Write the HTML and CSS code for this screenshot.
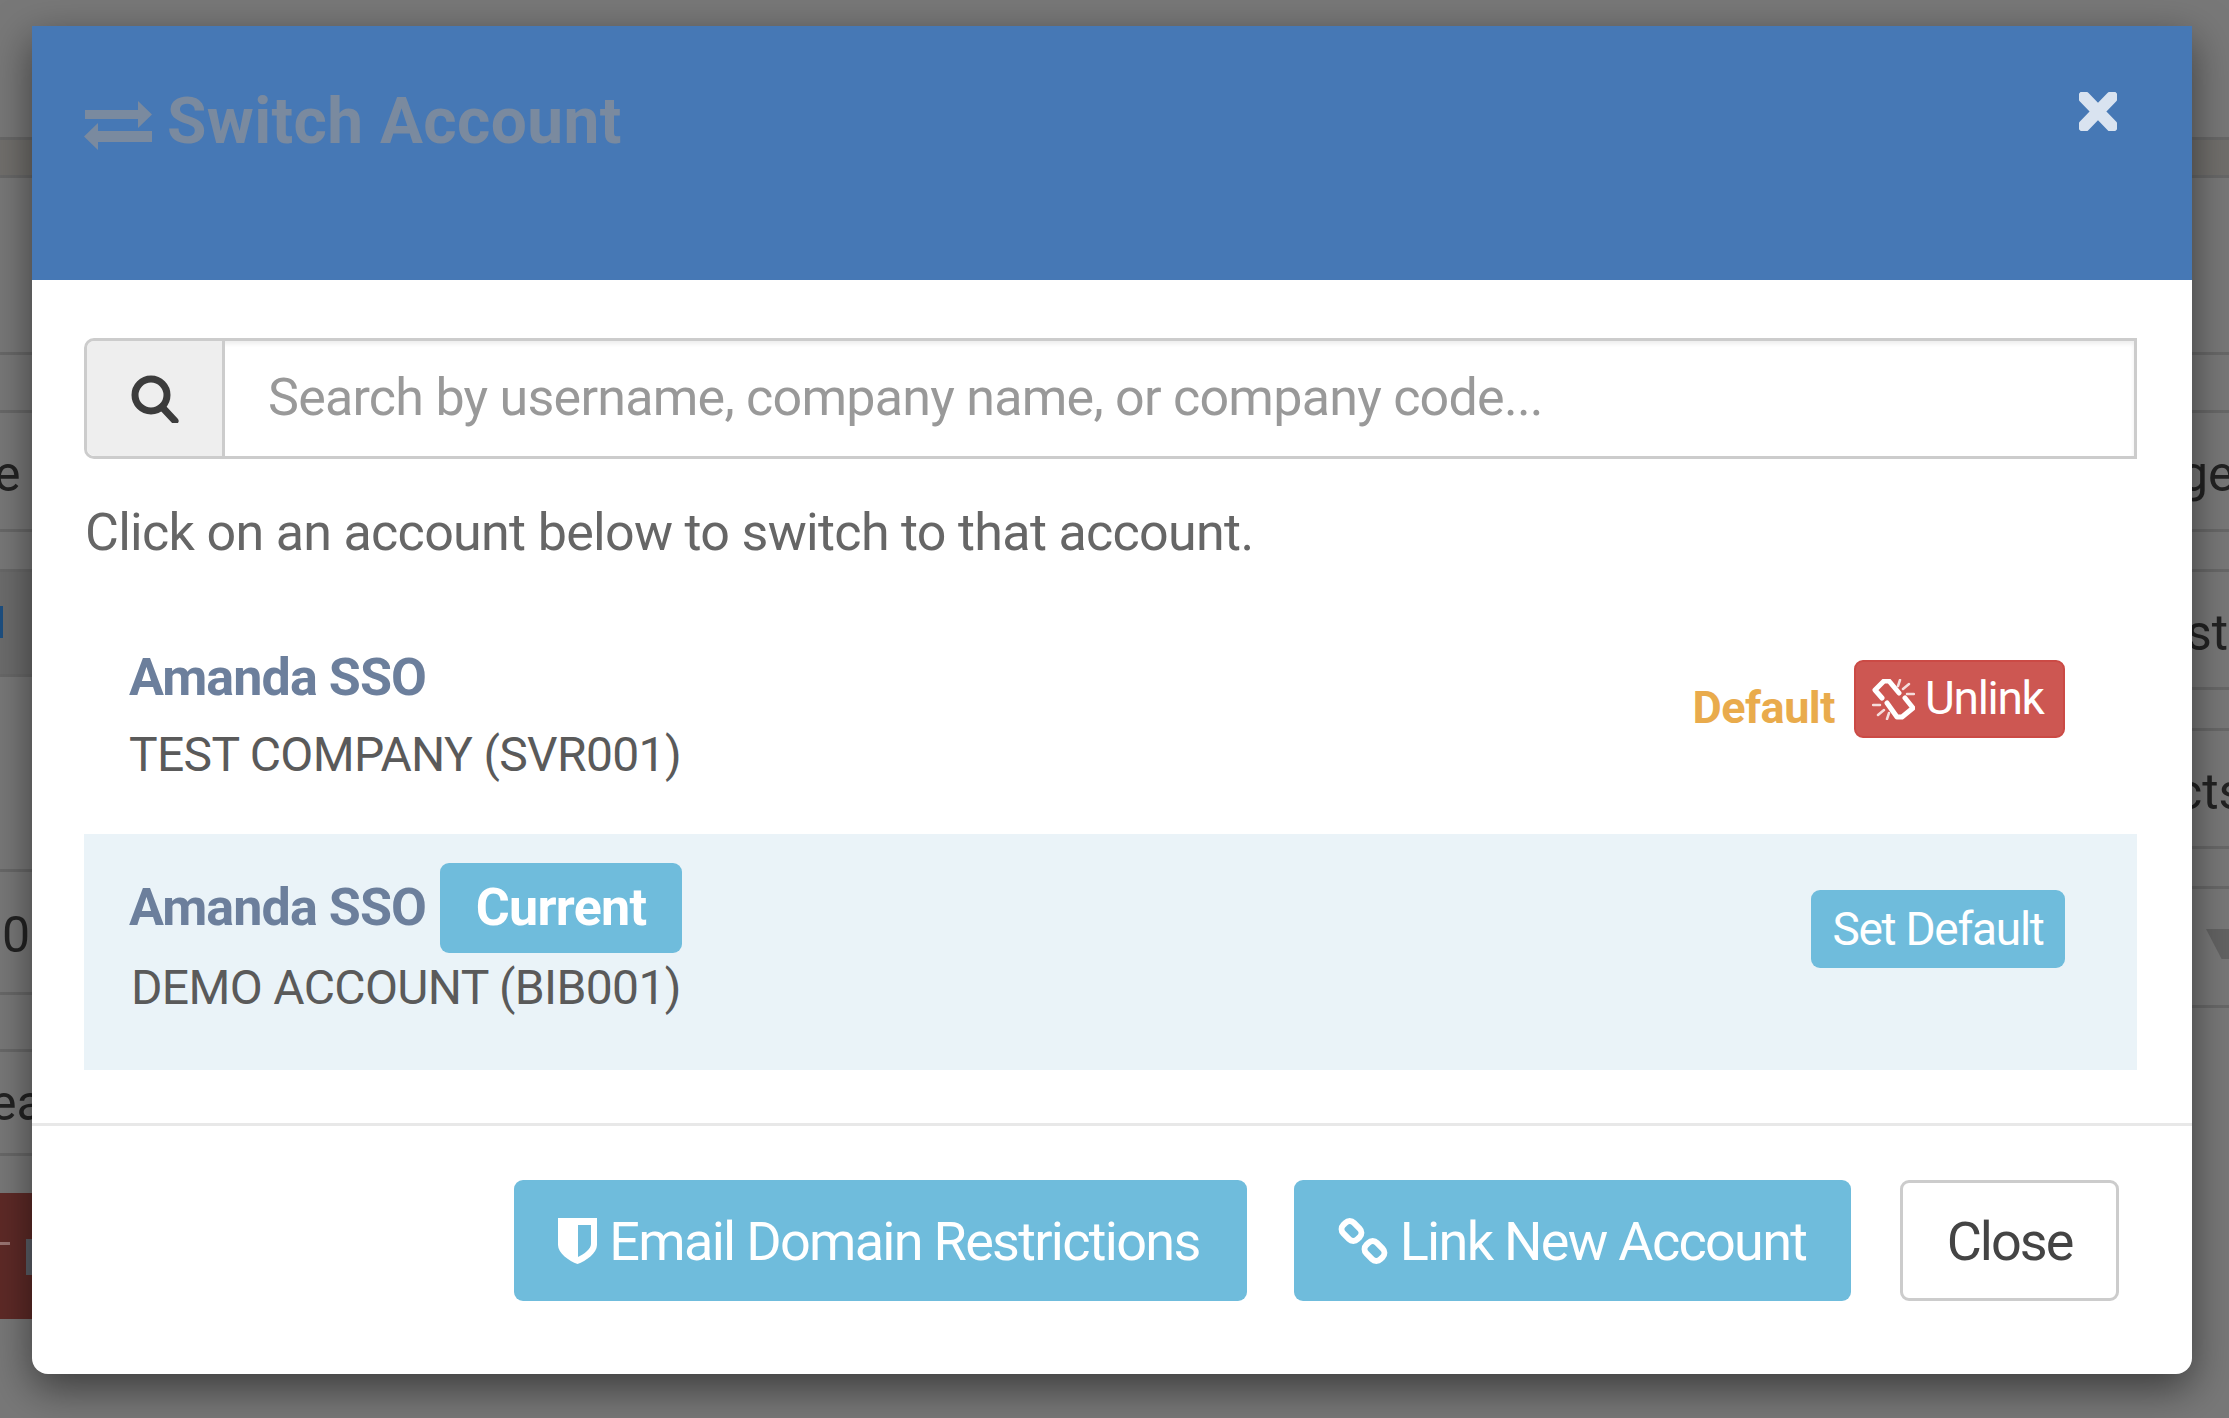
FILE: index.html
```html
<!DOCTYPE html>
<html lang="en">
<head>
<meta charset="utf-8">
<title>Switch Account</title>
<link rel="stylesheet" href="styles.css">
</head>
<body>
<div class="page">
  <div class="side side-left">
    <div class="cell"></div>
    <div class="cell cell-warm"></div>
    <div class="cell"></div>
    <div class="cell"></div>
    <div class="cell"><span class="frag frag-e">e</span></div>
    <div class="cell"></div>
    <div class="cell cell-dark"><span class="bluemark"></span></div>
    <div class="cell"></div>
    <div class="cell"><span class="frag frag-zero">0</span></div>
    <div class="cell"></div>
    <div class="cell"><span class="frag frag-ea">ea</span></div>
    <div class="cell-plain"></div>
    <div class="redbtn"><span class="red-dash"></span><span class="red-mark"></span></div>
  </div>
  <div class="side side-right">
    <div class="cell"></div>
    <div class="cell cell-warm"></div>
    <div class="cell"></div>
    <div class="cell"></div>
    <div class="cell"><span class="frag frag-ge">ge</span></div>
    <div class="cell"></div>
    <div class="cell"><span class="frag frag-st">st</span></div>
    <div class="cell"></div>
    <div class="cell"><span class="frag frag-cts">cts</span></div>
    <div class="cell"></div>
    <div class="cell"><span class="filter-tip"></span></div>
  </div>
</div>

<div class="modal">
  <header class="modal-head">
    <h2 class="title">
      <svg class="ico-exchange" viewBox="0 0 68 49"><path d="M1 9h53V0l14 13.500L54 27v-9H1zM68 30v11H14v8L0 35.500 14 22v8z"/></svg>
      <span>Switch Account</span>
    </h2>
    <svg class="ico-close" viewBox="0 0 38 39"><path d="M5 5l28 29M33 5L5 34"/></svg>
  </header>

  <div class="modal-body">
    <div class="search">
      <span class="search-addon">
        <svg class="ico-search" viewBox="0 0 48 48"><circle cx="20" cy="20" r="16"/><path d="M31 32l13 14"/></svg>
      </span>
      <span class="search-field">Search by username, company name, or company code...</span>
    </div>
    <p class="hint">Click on an account below to switch to that account.</p>

    <div class="account account-first">
      <div class="acc-info">
        <div class="acc-name"><span>Amanda SSO</span></div>
        <div class="acc-company">TEST COMPANY (SVR001)</div>
      </div>
      <div class="acc-actions">
        <span class="default-label">Default</span>
        <span class="btn-sm btn-danger">
          <svg class="ico-unlink" viewBox="0 0 43 41"><path class="thick" d="M10 19L3 11 12 2h5l10 12M15 24l10 14h5l11-9-8-10"/><path class="thin" d="M28 1l-2 6M37 5l-6 5M42 15h-7M15 40l2-6M6 36l6-5M1 26h7"/></svg>
          <span class="unlink-text">Unlink</span>
        </span>
      </div>
    </div>

    <div class="account account-current">
      <div class="acc-info">
        <div class="acc-name"><span>Amanda SSO</span><span class="badge">Current</span></div>
        <div class="acc-company acc-company-demo">DEMO ACCOUNT (BIB001)</div>
      </div>
      <div class="acc-actions">
        <span class="btn-sm btn-info">Set Default</span>
      </div>
    </div>
  </div>

  <footer class="modal-foot">
    <span class="btn btn-info btn-email">
      <svg class="ico-shield" viewBox="0 0 39 47"><path fill-rule="evenodd" d="M0 1h39v27c0 8-11 16-19.500 19C11 44 0 36 0 28zM20 8v32c6-3 13-8 13-13V8z"/></svg>
      <span>Email Domain Restrictions</span>
    </span>
    <span class="btn btn-info btn-link">
      <svg class="ico-link" viewBox="0 0 50 48"><rect x="3.500" y="6.500" width="20" height="15" rx="6" transform="rotate(45 13.500 14)"/><rect x="26.500" y="26.500" width="20" height="15" rx="6" transform="rotate(45 36.500 34)"/></svg>
      <span>Link New Account</span>
    </span>
    <span class="btn btn-default">Close</span>
  </footer>
</div>
</body>
</html>
```
FILE: styles.css
```css
* { box-sizing: border-box; }

html, body { margin: 0; height: 1418px; overflow: hidden; }

body {
  position: relative;
  background: #787878;
  font-family: Roboto, "Liberation Sans", sans-serif;
  color: #666;
}

/* dimmed page behind the dialog */
.page {
  display: flex;
  justify-content: space-between;
  height: 1418px;
  overflow: hidden;
  color: #222;
  font-size: 50px;
}

.side { display: grid; align-content: start; }

.side-left {
  width: 32px;
  grid-template-rows: 140px 38px 177px 58px 119px 40px 105px 195px 123px 57px 104px 37px 126px;
}

.side-right {
  width: 37px;
  grid-template-rows: 140px 38px 177px 58px 119px 40px 118px 41px 118px 40px 119px;
}

.cell {
  display: flex;
  align-items: center;
  position: relative;
  overflow: hidden;
  border-bottom: 3px solid #686868;
}

.cell-warm { background: #716f6c; }
.cell-dark { background: #6c6c6c; }

.frag { line-height: 1; white-space: nowrap; padding-top: 6px; }
.frag-e { margin-left: -6px; }
.frag-zero { margin-left: 2px; }
.frag-ea { margin-left: -10px; padding-top: 0; }
.frag-ge { margin-left: -12px; }
.frag-st { margin-left: -6px; }
.frag-cts { margin-left: -16px; }

.bluemark { position: absolute; left: 0; top: 34px; width: 3px; height: 32px; background: #1d4f80; }

.redbtn { position: relative; background: #5e2a27; }
.red-dash { position: absolute; left: 0; top: 49px; width: 10px; height: 3px; background: #9a7573; }
.red-mark { position: absolute; right: 0; top: 46px; width: 6px; height: 36px; background: #5c6068; }

.filter-tip {
  position: absolute;
  left: 14px;
  top: 40px;
  width: 26px;
  height: 30px;
  background: #636363;
  clip-path: polygon(0 0, 100% 0, 100% 100%, 60% 100%);
}

/* dialog */
.modal {
  position: absolute;
  left: 32px;
  top: 26px;
  width: 2160px;
  height: 1348px;
  display: flex;
  flex-direction: column;
  background: #fff;
  border-radius: 0 0 16px 16px;
  box-shadow: 0 14px 42px rgba(0, 0, 0, .5);
}

.modal-head {
  height: 254px;
  flex: none;
  background: #4678b5;
  display: flex;
  justify-content: space-between;
  align-items: flex-start;
  padding: 66px 75px 0 52px;
}

.title {
  margin: 0;
  display: flex;
  align-items: center;
  gap: 15px;
  font-size: 64px;
  line-height: 60px;
  letter-spacing: .4px;
  font-weight: 700;
  color: #7a8a9f;
}

.ico-exchange { width: 68px; height: 49px; fill: #7a8a9f; flex: none; margin-top: 6px; }

.ico-close { width: 38px; height: 39px; fill: none; stroke: #d9e3f0; stroke-width: 12; stroke-linecap: round; }

.modal-body { flex: 1; padding: 58px 55px 0 52px; }

.search {
  height: 121px;
  display: flex;
  border: 3px solid #ccc;
  border-radius: 10px 0 0 10px;
  box-shadow: inset 0 3px 4px rgba(0, 0, 0, .07);
}

.search-addon {
  width: 138px;
  flex: none;
  display: flex;
  align-items: center;
  justify-content: center;
  background: #eee;
  border-right: 3px solid #ccc;
  border-radius: 8px 0 0 8px;
}

.ico-search { width: 48px; height: 48px; fill: none; stroke: #3c3c3c; stroke-width: 7; stroke-linecap: round; }

.search-field {
  flex: 1;
  display: flex;
  align-items: center;
  padding: 0 0 2px 43px;
  font-size: 52px;
  letter-spacing: -.75px;
  color: #999;
}

.hint { margin: 44px 0 0 1px; font-size: 52px; line-height: 60px; letter-spacing: -.69px; color: #666; }

.account {
  display: flex;
  justify-content: space-between;
  align-items: center;
  padding: 0 72px 0 45px;
}

.account-first { height: 236px; margin-top: 35px; }
.account-current { height: 236px; background: #eaf3f8; }
.account-first .acc-actions { margin-bottom: 34px; }
.account-current .acc-actions { margin-bottom: 46px; }
.account-current .acc-info { margin-bottom: 23px; }

.acc-name {
  display: flex;
  align-items: center;
  gap: 14px;
  font-size: 52px;
  line-height: 60px;
  letter-spacing: -.9px;
  font-weight: 700;
  color: #6c7f9c;
}

.acc-company { margin-top: 17px; font-size: 48px; line-height: 60px; letter-spacing: -.65px; color: #5a5a5a; }
.acc-company-demo { margin-left: 2px; margin-top: 5px; }

.badge {
  width: 242px;
  height: 90px;
  display: flex;
  align-items: center;
  justify-content: center;
  background: #6fbcdc;
  color: #fff;
  letter-spacing: -.7px;
  border-radius: 9px;
}

.acc-actions { display: flex; align-items: center; gap: 19px; }

.default-label { font-size: 45px; letter-spacing: -.5px; font-weight: 700; color: #e9ab4c; padding-top: 16px; }

.btn-sm {
  height: 78px;
  display: inline-flex;
  align-items: center;
  justify-content: center;
  gap: 10px;
  font-size: 46px;
  letter-spacing: -1.3px;
  white-space: nowrap;
  color: #fff;
  border-radius: 9px;
}

.btn-danger { width: 211px; justify-content: flex-start; padding-left: 16px; background: #cd5752; border: 2px solid #cb4a45; }
.btn-sm.btn-info { width: 254px; }
.unlink-text { padding-bottom: 3px; }

.ico-unlink { width: 43px; height: 41px; fill: none; stroke: #fff; stroke-linecap: round; stroke-linejoin: round; }
.ico-unlink .thick { stroke-width: 5; }
.ico-unlink .thin { stroke-width: 2.500; opacity: .8; }

.btn-info { background: #6fbcdc; color: #fff; }

.modal-foot {
  flex: none;
  height: 251px;
  border-top: 3px solid #e8e8e8;
  display: flex;
  justify-content: flex-end;
  gap: 47px;
  padding: 54px 73px 0 0;
}

.btn {
  height: 121px;
  display: inline-flex;
  align-items: center;
  justify-content: center;
  gap: 12px;
  padding-top: 2px;
  font-size: 54px;
  letter-spacing: -1.7px;
  white-space: nowrap;
  border-radius: 9px;
}

.btn-email { width: 733px; padding-right: 3px; }
.btn-link { width: 557px; padding-right: 1px; }
.btn-default { width: 219px; margin-left: 2px; letter-spacing: -2px; background: #fff; border: 3px solid #ccc; color: #444; }

.ico-shield { width: 39px; height: 47px; margin-top: -2px; fill: #fff; }
.ico-link { width: 50px; height: 48px; margin-top: -2px; fill: none; stroke: #fff; stroke-width: 6; }
```
